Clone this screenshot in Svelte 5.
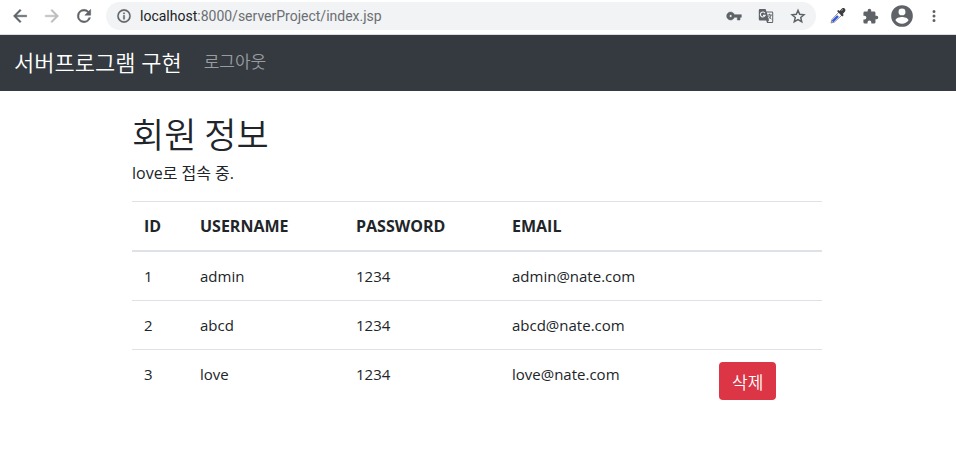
<script>
  const members = [
    { id: 1, username: 'admin', password: '1234', email: 'admin@nate.com' },
    { id: 2, username: 'abcd', password: '1234', email: 'abcd@nate.com' },
    { id: 3, username: 'love', password: '1234', email: 'love@nate.com' }
  ];
  const current = 'love';
  let address = $state('localhost:8000/serverProject/index.jsp');
  const host = $derived(address.split(':')[0]);
  const path = $derived(address.slice(host.length));
</script>

<header class="toolbar">
  <div class="history">
    <button class="icon" aria-label="Back">
      <svg width="20" height="20" viewBox="0 0 24 24"><path fill="#5f6368" d="M20 11H7.83l5.59-5.59L12 4l-8 8 8 8 1.41-1.41L7.83 13H20v-2z" stroke="#5f6368" stroke-width=".5" /></svg>
    </button>
    <button class="icon" aria-label="Forward" disabled>
      <svg width="20" height="20" viewBox="0 0 24 24"><path fill="#bbbdbf" d="M4 13h12.17l-5.59 5.59L12 20l8-8-8-8-1.41 1.41L16.17 11H4v2z" stroke="#bbbdbf" stroke-width=".5" /></svg>
    </button>
    <button class="icon" aria-label="Reload">
      <svg width="20" height="20" viewBox="0 0 24 24"><path fill="#5f6368" stroke="#5f6368" stroke-width=".6" d="M17.65 6.35A7.96 7.96 0 0 0 12 4a8 8 0 1 0 7.73 10h-2.08A6 6 0 1 1 12 6c1.66 0 3.14.69 4.22 1.78L13 11h7V4l-2.35 2.35z" /></svg>
    </button>
  </div>

  <div class="address">
    <button class="icon" aria-label="Site information">
      <svg width="16" height="16" viewBox="0 0 24 24"><path fill="#5f6368" d="M11 17h2v-6h-2v6zm1-15a10 10 0 1 0 0 20 10 10 0 0 0 0-20zm0 18a8 8 0 1 1 0-16 8 8 0 0 1 0 16zM11 9h2V7h-2v2z" stroke="#5f6368" stroke-width=".5" /></svg>
    </button>
    <a class="url" href="#top"><span class="host">{host}</span>{path}</a>
    <div class="actions">
      <button class="icon" aria-label="Passwords">
        <svg width="16" height="16" viewBox="0 0 24 24"><path fill="#5f6368" stroke="#5f6368" stroke-width=".8" d="M12.650 10A6 6 0 1 0 12.650 14H17v4h4v-4h2v-4H12.650zM7 14a2 2 0 1 1 0-4 2 2 0 0 1 0 4z" /></svg>
      </button>
      <button class="icon" aria-label="Translate">
        <svg width="16" height="16" viewBox="0 0 16 16">
          <path fill="#5f6368" d="M2 1h5.6l.8 2.500H14A1.200 1.200 0 0 1 15.200 4.700v9A1.200 1.200 0 0 1 14 14.900H9L8.200 12.500H2A1.200 1.200 0 0 1 .8 11.300V2.200A1.200 1.200 0 0 1 2 1z" />
          <path fill="#f1f3f4" d="M8.800 4.500H14.200V13.900H9.800L11 12.500z" />
          <path fill="none" stroke="#f1f3f4" stroke-width="1.100" d="M7 5.100a2.500 2.500 0 1 0 .2 2.300H5" />
          <path fill="none" stroke="#5f6368" d="M9.500 7h4.300M11.600 5.800V7M13 7c-.2 1.800-1.500 3.300-2.500 3.900M10.500 8l2.900 3.300" />
        </svg>
      </button>
      <button class="icon" aria-label="Bookmark">
        <svg width="16" height="16" viewBox="0 0 24 24"><path fill="none" stroke="#5f6368" stroke-width="2.200" d="M12 3.500l2.500 6 6.500.6-4.900 4.200 1.500 6.300L12 17.300l-5.600 3.300 1.500-6.300L3 10.100l6.500-.6z" /></svg>
      </button>
    </div>
  </div>

  <div class="extensions">
    <button class="icon" aria-label="Color picker">
      <svg width="18" height="18" viewBox="0 0 18 18">
        <path fill="#fff" stroke="#8a8d91" d="M10 5l3 3-7.500 7-3.500 1 1-3.500z" />
        <path stroke="#3156dc" stroke-width="2.400" d="M3.500 14.500L9 9" />
        <path fill="#3d3d40" d="M8 4l1.500-1 1 1L13 1.500c2-1.500 4.500 1 3 3L13.800 7l1 1-1.500 1.500z" />
        <path stroke="#aaa" d="M12.500 3.500l1.500-1" />
      </svg>
    </button>
    <button class="icon" aria-label="Extensions">
      <svg width="17" height="17" viewBox="0 0 24 24"><path fill="#5f6368" d="M20.500 11H19V7a2 2 0 0 0-2-2h-4V3.500a2.500 2.500 0 0 0-5 0V5H4a2 2 0 0 0-2 2v3.800h1.500a2.700 2.700 0 0 1 0 5.400H2V20a2 2 0 0 0 2 2h3.800v-1.500a2.700 2.700 0 0 1 5.400 0V22H17a2 2 0 0 0 2-2v-4h1.500a2.500 2.500 0 0 0 0-5z" /></svg>
    </button>
    <button class="icon" aria-label="Profile">
      <svg width="26" height="26" viewBox="0 0 24 24"><path fill="#5f6368" d="M12 2a10 10 0 1 0 0 20 10 10 0 0 0 0-20zm0 3a3.200 3.200 0 1 1 0 6.400A3.200 3.200 0 0 1 12 5zm0 14.200a7.200 7.200 0 0 1-6-3.220c.03-1.990 4-3.080 6-3.080s5.970 1.090 6 3.080a7.200 7.200 0 0 1-6 3.220z" /></svg>
    </button>
    <button class="icon" aria-label="Menu">
      <svg width="18" height="18" viewBox="0 0 24 24"><path fill="#5f6368" d="M12 8a2 2 0 1 0 0-4 2 2 0 0 0 0 4zm0 2a2 2 0 1 0 0 4 2 2 0 0 0 0-4zm0 6a2 2 0 1 0 0 4 2 2 0 0 0 0-4z" /></svg>
    </button>
  </div>
</header>

<nav>
  <a class="brand" href="#top">서버프로그램 구현</a>
  <a class="link" href="#logout">로그아웃</a>
</nav>

<main>
  <div class="container">
    <h2>회원 정보</h2>
    <p>{current}로 접속 중.</p>
    <table>
      <colgroup>
        <col class="c-id" /><col class="c-text" /><col class="c-text" /><col class="c-email" /><col />
      </colgroup>
      <thead>
        <tr><th>ID</th><th>USERNAME</th><th>PASSWORD</th><th>EMAIL</th><th></th></tr>
      </thead>
      <tbody>
        {#each members as m (m.id)}
          <tr>
            <td>{m.id}</td>
            <td>{m.username}</td>
            <td>{m.password}</td>
            <td>{m.email}</td>
            <td>{#if m.username === current}<button class="delete">삭제</button>{/if}</td>
          </tr>
        {/each}
      </tbody>
    </table>
  </div>
</main>

<style>
  :global(body) {
    margin: 0;
    background: #fff;
    color: #212529;
    font: 15px/24px "Open Sans", "Noto Sans CJK KR", sans-serif;
  }
  a { text-decoration: none; }
  button { font-family: inherit; border: 0; cursor: pointer; }
  .icon {
    display: flex;
    justify-content: center;
    padding: 0;
    background: none;
  }
  .toolbar {
    display: flex;
    align-items: center;
    gap: 6px;
    height: 32px;
    padding: 0 6px 2px 10px;
    border-bottom: 1px solid #dadce0;
  }
  .history { display: flex; gap: 12px; padding-right: 6px; }
  .address {
    flex: 1;
    display: flex;
    align-items: center;
    gap: 8px;
    height: 28px;
    padding: 0 10px;
    border-radius: 14px;
    background: #f1f3f4;
  }
  .url {
    flex: 1;
    font-family: Roboto, sans-serif;
    font-size: 14px;
    color: #6b6f73;
  }
  .host { color: #202124; }
  .actions { display: flex; gap: 16px; }
  .extensions { display: flex; align-items: center; }
  .extensions .icon { width: 32px; }
  nav {
    display: flex;
    align-items: center;
    gap: 22px;
    height: 54px;
    padding: 0 14px 2px;
    background: #343a40;
  }
  .brand { font-size: 22px; font-weight: 350; color: #fff; }
  .link { font-size: 17px; font-weight: 350; color: #9a9da0; }
  main { padding: 22px 18px 24px 16px; }
  .container { max-width: 690px; margin: 0 auto; }
  h2 {
    margin: 0 0 8px;
    font-family: "Noto Sans CJK KR", sans-serif;
    font-size: 35px;
    line-height: 40px;
    font-weight: 350;
  }
  p { margin: 0 0 16px; font-size: 16px; }
  table {
    width: 100%;
    table-layout: fixed;
    border-collapse: collapse;
  }
  .c-id { width: 56px; }
  .c-text { width: 156px; }
  .c-email { width: 30%; }
  th, td {
    padding: 12px;
    border-top: 1px solid #dee2e6;
    text-align: left;
    vertical-align: top;
  }
  thead th { border-bottom: 2px solid #dee2e6; font-size: 16px; }
  .delete {
    display: block;
    height: 38px;
    padding: 0 13px;
    border-radius: 4px;
    background: #dc3545;
    color: #fff;
    font-size: 17px;
    font-weight: 350;
  }
</style>
